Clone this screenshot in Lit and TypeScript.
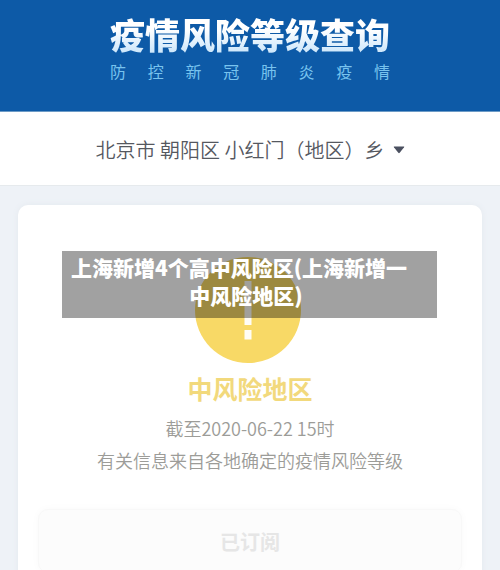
import { LitElement, html, css } from "lit";
import { customElement, state } from "lit/decorators.js";

@customElement("app-root")
export class AppRoot extends LitElement {
  static styles = css`
    :host {
      display: flex;
      flex-direction: column;
      height: 100vh;
      overflow: hidden;
      position: relative;
      background: #eef2f7;
      color: #9c9c98;
      font-family: "Noto Sans CJK SC", "Noto Sans", sans-serif;
    }
    .banner {
      display: flex;
      flex-direction: column;
      align-items: center;
      flex: none;
      padding: 10px 0 27px;
      background: #0d5aa7;
      border-bottom: 1px solid #6d9bc6;
    }
    .banner-text {
      width: min-content;
    }
    h1 {
      margin: 0;
      font-size: 35px;
      line-height: 48px;
      font-weight: 900;
      white-space: nowrap;
      color: transparent;
      background: linear-gradient(#ffffff 40%, #cbe6fb 90%);
      background-clip: text;
      -webkit-background-clip: text;
    }
    .tagline {
      margin: 0;
      font-size: 16px;
      line-height: 26px;
      text-align-last: justify;
      color: #78c3ee;
    }
    .region {
      display: flex;
      justify-content: center;
      align-items: center;
      flex: none;
      padding: 22px 0 19px;
      background: #ffffff;
      border-bottom: 1px solid #e6eaed;
    }
    .region select {
      appearance: none;
      border: 0;
      padding: 0 20px 0 0;
      background: transparent;
      font-family: inherit;
      font-size: 20px;
      line-height: 32px;
      font-weight: 350;
      color: #55585f;
    }
    .arrow {
      width: 12px;
      height: 8px;
      margin-left: -12px;
      fill: #4b5060;
      pointer-events: none;
    }
    .card {
      display: flex;
      flex-direction: column;
      align-items: center;
      flex: 1 0 auto;
      margin: 19px 18px 0;
      padding: 52px 20px 20px;
      background: #ffffff;
      border-radius: 10px 10px 0 0;
      box-shadow: 0 0 6px #e4e9ee;
    }
    .level-icon {
      width: 112px;
      height: 108px;
    }
    h2 {
      margin: 3px 0 0;
      font-size: 25px;
      line-height: 40px;
      font-weight: 700;
      color: #f2d97c;
    }
    .card p {
      margin: 0;
      font-size: 18px;
      line-height: 32px;
      font-weight: 350;
    }
    .card .time {
      margin-top: 4px;
    }
    .subscribe {
      flex: none;
      width: 100%;
      height: 64px;
      margin-top: 33px;
      border: 1px solid #f8f8f8;
      border-radius: 10px;
      background: #fcfcfc;
      box-shadow: 0 0 8px #f9f9f9;
      font-family: inherit;
      font-size: 20px;
      font-weight: 700;
      color: #e6e6e6;
    }
    .caption {
      position: absolute;
      top: 251px;
      left: 62px;
      right: 63px;
      box-sizing: border-box;
      margin: 0;
      padding: 2px 7px 9px 0;
      background: rgba(0, 0, 0, 0.37);
      color: #ffffff;
      font-size: 21px;
      line-height: 28px;
      font-weight: 900;
      text-align: center;
      text-indent: -14px;
    }
  `;

  @state() private subscribed = true;

  render() {
    return html`
      <header class="banner">
        <div class="banner-text">
          <h1>疫情风险等级查询</h1>
          <p class="tagline">防 控 新 冠 肺 炎 疫 情</p>
        </div>
      </header>
      <div class="region">
        <select aria-label="地区">
          <option>北京市 朝阳区 小红门（地区）乡</option>
        </select>
        <svg class="arrow" viewBox="0 0 12 8" aria-hidden="true">
          <path d="M1.2 0.5h9.6q.9 0 .3.8L6.7 6.8q-.7.8-1.4 0L.9 1.3Q.3.5 1.2.5z" />
        </svg>
      </div>
      <main class="card">
        <svg class="level-icon" viewBox="0 0 112 108" aria-hidden="true">
          <circle cx="54" cy="53" r="53" fill="#f8d966" />
          <path d="M50.500 24h7v44h-7zM50.500 73h7v9.500h-7z" fill="#fffdf6" />
        </svg>
        <h2>中风险地区</h2>
        <p class="time">截至2020-06-22 15时</p>
        <p>有关信息来自各地确定的疫情风险等级</p>
        <button
          class="subscribe"
          type="button"
          @click=${() => (this.subscribed = !this.subscribed)}
        >
          ${this.subscribed ? "已订阅" : "订阅"}
        </button>
      </main>
      <p class="caption">上海新增4个高中风险区(上海新增一<br />中风险地区)</p>
    `;
  }
}
